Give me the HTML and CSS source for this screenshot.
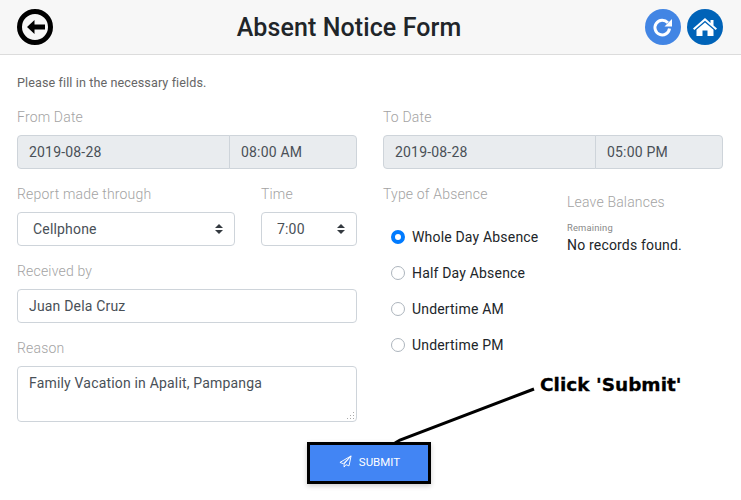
FILE: index.html
```html
<!DOCTYPE html>
<html lang="en">
<head>
    <meta charset="UTF-8">
    <meta name="viewport" content="width=device-width, initial-scale=1.0">
    <title>Absent Notice Form</title>
    <link rel="stylesheet" href="styles.css">
</head>
<body>
    <header class="topbar">
        <a class="back-link" href="#">
            <svg class="round-icon" viewBox="0 0 36 36">
                <circle cx="18" cy="18" r="15.500" fill="none" stroke="#000" stroke-width="5"/>
                <path d="M10 18l7.500-7v4.500H28v5H17.500V25z" fill="#000"/>
            </svg>
        </a>
        <h1 class="page-title">Absent Notice Form</h1>
        <div class="top-actions">
            <a href="#">
                <svg class="round-icon" viewBox="0 0 36 36">
                    <circle cx="18" cy="18" r="18" fill="#4285e4"/>
                    <path d="M22.800 13.800a7.300 7.300 0 1 0 1.700 5.700" fill="none" stroke="#fff" stroke-width="3"/>
                    <path d="M27 10v7.500h-7.500z" fill="#fff"/>
                </svg>
            </a>
            <a href="#">
                <svg class="round-icon" viewBox="0 0 36 36">
                    <circle cx="18" cy="18" r="18" fill="#0063b8"/>
                    <path d="M18 9L6 19.500l1.300 1.500L18 11.700 28.700 21l1.300-1.500-3.500-3V11h-3v2.900z" fill="#fff"/>
                    <path d="M18 13.500l-8.500 7.300V27h6v-5.500h5V27h6v-6.200z" fill="#fff"/>
                </svg>
            </a>
        </div>
    </header>

    <form class="notice-form">
        <p class="hint">Please fill in the necessary fields.</p>
        <div class="columns">
            <div class="col">
                <div class="field">
                    <label>From Date</label>
                    <div class="date-group">
                        <input class="control readonly" type="text" value="2019-08-28" readonly>
                        <input class="control readonly time" type="text" value="08:00 AM" readonly>
                    </div>
                </div>
                <div class="field-row">
                    <div class="field">
                        <label>Report made through</label>
                        <select class="control picker">
                            <option>Cellphone</option>
                        </select>
                    </div>
                    <div class="field">
                        <label>Time</label>
                        <select class="control picker">
                            <option>7:00</option>
                        </select>
                    </div>
                </div>
                <div class="field">
                    <label>Received by</label>
                    <input class="control" type="text" value="Juan Dela Cruz">
                </div>
                <div class="field">
                    <label>Reason</label>
                    <div class="reason-wrap">
                        <textarea class="control reason">Family Vacation in Apalit, Pampanga</textarea>
                        <svg class="grip" width="9" height="9" viewBox="0 0 9 9">
                            <path d="M7 1h1v1H7zM4 4h1v1H4zM7 4h1v1H7zM1 7h1v1H1zM4 7h1v1H4zM7 7h1v1H7z" fill="#aaa"/>
                        </svg>
                    </div>
                </div>
            </div>
            <div class="col">
                <div class="field">
                    <label>To Date</label>
                    <div class="date-group">
                        <input class="control readonly" type="text" value="2019-08-28" readonly>
                        <input class="control readonly time" type="text" value="05:00 PM" readonly>
                    </div>
                </div>
                <div class="absence-row">
                    <div class="absence-types">
                        <label>Type of Absence</label>
                        <div class="radio-list">
                            <label class="radio"><input type="radio" name="type" checked>Whole Day Absence</label>
                            <label class="radio"><input type="radio" name="type">Half Day Absence</label>
                            <label class="radio"><input type="radio" name="type">Undertime AM</label>
                            <label class="radio"><input type="radio" name="type">Undertime PM</label>
                        </div>
                    </div>
                    <div class="balances">
                        <label>Leave Balances</label>
                        <small>Remaining</small>
                        <p>No records found.</p>
                    </div>
                </div>
            </div>
        </div>
        <div class="form-actions">
            <button type="submit" class="submit-btn">
                <svg class="send-icon" viewBox="0 0 14 14">
                    <path d="M13 1L1 8l3.500 1.300L13 1zM13 1l-7.500 8.800V13l2-2.600 3.300 1.300z" fill="none" stroke="#fff" stroke-width="1" stroke-linejoin="round"/>
                </svg>
                SUBMIT
            </button>
        </div>
    </form>

    <!-- annotation on top of the screenshot -->
    <svg class="callout-line" width="150" height="60" viewBox="0 0 150 60">
        <path d="M1 57l5-3L140 3" fill="none" stroke="#000" stroke-width="3"/>
    </svg>
    <div class="callout-text">Click 'Submit'</div>
</body>
</html>
```

FILE: styles.css
```css
body {
    font-family: Roboto, "Liberation Sans", sans-serif;
    font-size: 14px;
    letter-spacing: 0.18px;
    color: #212529;
    background-color: #fff;
    margin: 0;
    padding: 0;
    position: relative;
    height: 500px;
    overflow: hidden;
}
.topbar {
    display: grid;
    grid-template-columns: 1fr auto 1fr;
    align-items: center;
    height: 54px;
    padding: 0 18px 0 17px;
    background-color: #f7f7f7;
    border-bottom: 1px solid #dcdcdc;
}
.back-link, .top-actions a {
    display: block;
    height: 36px;
}
.round-icon {
    display: block;
    width: 36px;
    height: 36px;
}
.page-title {
    margin: 0 42px 0 0;
    font-size: 25px;
    font-weight: 500;
    letter-spacing: 0.1px;
    color: #212529;
}
.top-actions {
    display: flex;
    justify-content: flex-end;
    gap: 6px;
}
.notice-form {
    padding: 18px 18px 0 17px;
}
.hint {
    margin: 0 0 14px;
    font-size: 12.6px;
    letter-spacing: 0.1px;
    line-height: 20px;
    color: #666;
}
.columns {
    display: grid;
    grid-template-columns: 340px 340px;
    gap: 26px;
}
.field {
    margin-bottom: 15px;
}
.field-row {
    display: grid;
    grid-template-columns: 218px 96px;
    gap: 26px;
}
label {
    display: block;
    line-height: 21px;
    margin-bottom: 7px;
    font-weight: 300;
    color: #a3a3a3;
}
.control {
    display: block;
    box-sizing: border-box;
    width: 100%;
    height: 34px;
    padding: 0 11px;
    font-family: inherit;
    font-size: 14px;
    letter-spacing: inherit;
    color: #495057;
    background-color: #fff;
    border: 1px solid #ced4da;
    border-radius: 4px;
    outline: none;
}
.date-group {
    display: flex;
}
.readonly {
    background-color: #e9ecef;
    border-radius: 4px 0 0 4px;
}
.readonly.time {
    flex: 0 0 128px;
    width: 128px;
    margin-left: -1px;
    border-radius: 0 4px 4px 0;
}
.picker {
    appearance: none;
    padding-left: 15px;
    background-image: url("data:image/svg+xml,%3Csvg xmlns='http://www.w3.org/2000/svg' width='8' height='10'%3E%3Cpath d='M4 0l4 4H0zM4 10L0 6h8z' fill='%23343a40'/%3E%3C/svg%3E");
    background-repeat: no-repeat;
    background-position: right 11px center;
}
.reason-wrap {
    position: relative;
}
.reason {
    height: 56px;
    padding: 6px 11px;
    line-height: 21px;
    resize: none;
}
.grip {
    position: absolute;
    right: 2px;
    bottom: 2px;
}
.absence-row {
    display: flex;
}
.absence-types {
    flex: 0 0 184px;
}
.radio-list {
    margin-top: 14px;
}
.radio {
    display: flex;
    align-items: center;
    height: 36px;
    margin: 0;
    font-weight: 400;
    color: #212529;
}
.radio input {
    appearance: none;
    box-sizing: border-box;
    width: 14px;
    height: 14px;
    margin: 0 7px 0 8px;
    background: #fff;
    border: 1px solid #adb5bd;
    border-radius: 50%;
}
.radio input:checked {
    border: 4px solid #007bff;
}
.balances {
    padding-top: 8px;
}
.balances label {
    margin-bottom: 0;
}
.balances small {
    display: block;
    margin-top: 9px;
    font-size: 9.4px;
    line-height: 12px;
    color: #888;
}
.balances p {
    margin: 1px 0 0;
    line-height: 21px;
    color: #212529;
}
.form-actions {
    display: flex;
    justify-content: center;
    margin-top: 5px;
    padding-right: 2px;
}
.submit-btn {
    display: flex;
    align-items: center;
    justify-content: center;
    gap: 7px;
    box-sizing: border-box;
    width: 124px;
    height: 42px;
    padding: 0 0 3px 1px;
    font-family: inherit;
    font-size: 11.500px;
    letter-spacing: 0;
    color: #fff;
    background-color: #4285f4;
    border: 3px solid #000;
    box-shadow: 0 2px 5px rgba(0, 0, 0, 0.2);
}
.send-icon {
    width: 13px;
    height: 13px;
}
.callout-line {
    position: absolute;
    left: 394px;
    top: 386px;
}
.callout-text {
    position: absolute;
    left: 540px;
    top: 374px;
    font-family: "DejaVu Sans", Arial, sans-serif;
    font-size: 18.500px;
    line-height: 22px;
    letter-spacing: 0;
    font-weight: 700;
    color: #000;
    -webkit-text-stroke: 0.3px #000;
}
```
